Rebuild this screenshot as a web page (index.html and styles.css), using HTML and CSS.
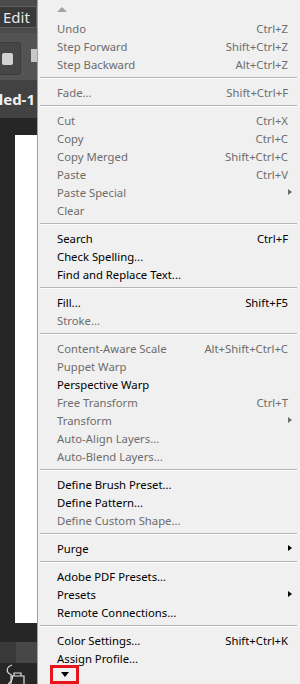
FILE: index.html
```html
<!DOCTYPE html>
<html lang="en">
<head>
  <meta charset="UTF-8">
  <meta name="viewport" content="width=device-width, initial-scale=1.0">
  <title>Edit Menu</title>
  <link rel="stylesheet" href="styles.css">
</head>
<body>
  <!-- Ventana de fondo (recortada) -->
  <div class="app">
    <div class="app-menubar">
      <div class="app-menu-item">Edit</div>
    </div>
    <div class="app-options">
      <div class="tool-btn"><span class="tool-square"></span></div>
      <div class="swatch"></div>
    </div>
    <div class="app-tab"><span>Untitled-1</span></div>
    <div class="app-doc">
      <div class="canvas"></div>
    </div>
    <div class="app-status">
      <div class="status-field"></div>
    </div>
    <div class="app-dock">
      <svg width="37" height="21" viewBox="0 0 37 21">
        <path d="M12 2 C6 4 6 9 10 11 C14 13 13 18 8 21" fill="none" stroke="#d8d8d8" stroke-width="1.2"/>
        <path d="M11 21 V13 H24 V21 M14 13 V10 H21 V13" fill="none" stroke="#e0e0e0" stroke-width="1.2"/>
      </svg>
    </div>
  </div>

  <!-- Menú Edit -->
  <div class="menu">
    <div class="scroll-up"><span class="tri-up"></span></div>

    <div class="item disabled"><span>Undo</span><span class="key">Ctrl+Z</span></div>
    <div class="item disabled"><span>Step Forward</span><span class="key">Shift+Ctrl+Z</span></div>
    <div class="item disabled"><span>Step Backward</span><span class="key">Alt+Ctrl+Z</span></div>
    <div class="sep"></div>
    <div class="item disabled"><span>Fade...</span><span class="key">Shift+Ctrl+F</span></div>
    <div class="sep"></div>
    <div class="item disabled"><span>Cut</span><span class="key">Ctrl+X</span></div>
    <div class="item disabled"><span>Copy</span><span class="key">Ctrl+C</span></div>
    <div class="item disabled"><span>Copy Merged</span><span class="key">Shift+Ctrl+C</span></div>
    <div class="item disabled"><span>Paste</span><span class="key">Ctrl+V</span></div>
    <div class="item disabled"><span>Paste Special</span><span class="key"></span><span class="sub"></span></div>
    <div class="item disabled"><span>Clear</span></div>
    <div class="sep"></div>
    <div class="item"><span>Search</span><span class="key">Ctrl+F</span></div>
    <div class="item"><span>Check Spelling...</span></div>
    <div class="item"><span>Find and Replace Text...</span></div>
    <div class="sep"></div>
    <div class="item"><span>Fill...</span><span class="key">Shift+F5</span></div>
    <div class="item disabled"><span>Stroke...</span></div>
    <div class="sep"></div>
    <div class="item disabled"><span>Content-Aware Scale</span><span class="key">Alt+Shift+Ctrl+C</span></div>
    <div class="item disabled"><span>Puppet Warp</span></div>
    <div class="item"><span>Perspective Warp</span></div>
    <div class="item disabled"><span>Free Transform</span><span class="key">Ctrl+T</span></div>
    <div class="item disabled"><span>Transform</span><span class="key"></span><span class="sub"></span></div>
    <div class="item disabled"><span>Auto-Align Layers...</span></div>
    <div class="item disabled"><span>Auto-Blend Layers...</span></div>
    <div class="sep"></div>
    <div class="item"><span>Define Brush Preset...</span></div>
    <div class="item"><span>Define Pattern...</span></div>
    <div class="item disabled"><span>Define Custom Shape...</span></div>
    <div class="sep"></div>
    <div class="item"><span>Purge</span><span class="key"></span><span class="sub"></span></div>
    <div class="sep"></div>
    <div class="item"><span>Adobe PDF Presets...</span></div>
    <div class="item"><span>Presets</span><span class="key"></span><span class="sub"></span></div>
    <div class="item"><span>Remote Connections...</span></div>
    <div class="sep"></div>
    <div class="item"><span>Color Settings...</span><span class="key">Shift+Ctrl+K</span></div>
    <div class="item"><span>Assign Profile...</span></div>

    <div class="scroll-down"><span class="tri-down"></span></div>
  </div>
</body>
</html>
```

FILE: styles.css
```css
body {
  margin: 0;
  width: 300px;
  height: 684px;
  overflow: hidden;
  display: flex;
  font-family: "Noto Sans", "Open Sans", sans-serif;
}

/* ventana de fondo */
.app {
  width: 37px;
  flex-shrink: 0;
  display: flex;
  flex-direction: column;
  background-color: #262626;
  overflow: hidden;
}

.app-menubar {
  height: 33px;
  box-sizing: border-box;
  padding-top: 6px;
  background-color: #4b4b4b;
}

.app-menu-item {
  height: 22px;
  box-sizing: border-box;
  padding-left: 3px;
  background-color: #393939;
  border: 1px solid #5e5e5e;
  border-left: none;
  color: #e8e8e8;
  font-size: 15px;
  line-height: 20px;
}

.app-options {
  height: 47px;
  box-sizing: border-box;
  padding-top: 9px;
  display: flex;
  align-items: flex-start;
  background-color: #535353;
}

.tool-btn {
  width: 22px;
  height: 33px;
  box-sizing: border-box;
  display: flex;
  align-items: center;
  padding-left: 2px;
  background-color: #464646;
  border: 1px solid #3c3c3c;
  border-left: none;
  border-radius: 0 4px 4px 0;
}

.tool-square {
  width: 11px;
  height: 12px;
  background-color: #d2d2d2;
  border-radius: 2px;
}

.swatch {
  width: 6px;
  height: 13px;
  margin: 7px 0 0 10px;
  background-color: #c8c8c8;
}

.app-tab {
  height: 38px;
  display: flex;
  justify-content: flex-end;
  align-items: center;
  padding-right: 2px;
  background-color: #424242;
  color: #f2f2f2;
  font-size: 15px;
  font-weight: bold;
  white-space: nowrap;
}

.app-doc {
  flex: 1;
  display: flex;
  padding: 17px 0 19px 15px;
}

.canvas {
  flex: 1;
  background-color: #fff;
}

.app-status {
  height: 21px;
  display: flex;
  background-color: #393939;
}

.status-field {
  flex: 1;
  margin-left: 16px;
  background-color: #474747;
}

.app-dock {
  height: 21px;
  background-color: #262626;
}

.app-dock svg {
  display: block;
}

/* menú */
.menu {
  flex: 1;
  display: flex;
  flex-direction: column;
  background-color: #f0f0f0;
  border-left: 1px solid #a0a0a0;
  font-size: 11.3px;
  color: #000;
}

.scroll-up {
  height: 19px;
  display: flex;
  align-items: center;
  padding-left: 19px;
}

.tri-up {
  border-left: 5.5px solid transparent;
  border-right: 5.5px solid transparent;
  border-bottom: 5px solid #a3a3a3;
}

.item {
  height: 18px;
  display: grid;
  grid-template-columns: 1fr auto 12px;
  align-items: center;
  padding-left: 19px;
  white-space: nowrap;
}

.item.disabled {
  color: #6d6d6d;
}

.key {
  text-align: right;
}

.sub {
  width: 0;
  height: 0;
  border-left: 4px solid #000;
  border-top: 3.5px solid transparent;
  border-bottom: 3.5px solid transparent;
}

.item.disabled .sub {
  border-left-color: #6d6d6d;
}

.sep {
  height: 10px;
  box-sizing: border-box;
  margin: 0 3px 0 2px;
  padding-top: 4px;
}

.sep::before {
  content: "";
  display: block;
  border-top: 1px solid #b4b4b4;
  border-bottom: 1px solid #fcfcfc;
}

.scroll-down {
  display: flex;
  margin-top: -2px;
  padding-left: 12px;
}

.scroll-down .tri-down {
  width: 23px;
  height: 13px;
  display: flex;
  align-items: center;
  justify-content: center;
  border: 3px solid #e8141c;
}

.scroll-down .tri-down::before {
  content: "";
  border-left: 4.5px solid transparent;
  border-right: 4.5px solid transparent;
  border-top: 5px solid #000;
}
```
